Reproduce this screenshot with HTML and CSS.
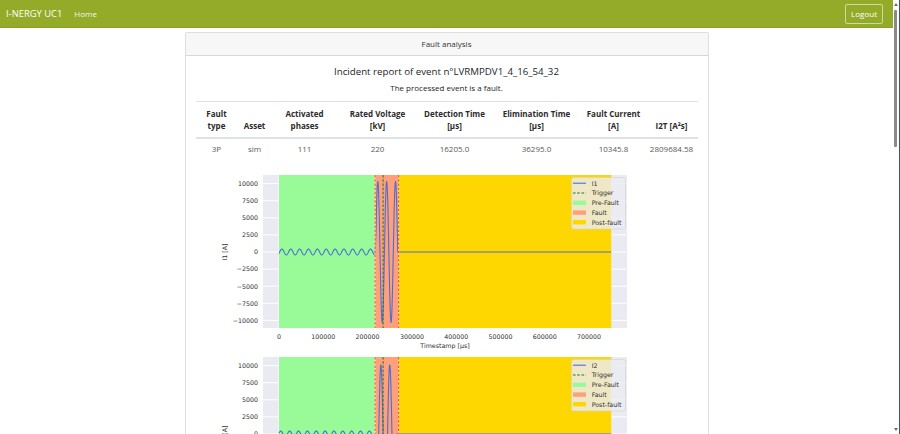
FILE: index.html
```html
<!DOCTYPE html>
<html lang="en">
<head>
<meta charset="utf-8">
<title>I-NERGY UC1</title>
<link rel="stylesheet" href="styles.css">
</head>
<body>
<div class="page">
  <nav class="navbar">
    <a class="brand" href="#">I-NERGY UC1</a>
    <a class="nav-link" href="#">Home</a>
    <button class="btn-logout" type="button">Logout</button>
  </nav>
  <main class="container">
    <section class="card">
      <header class="card-header">Fault analysis</header>
      <div class="card-body">
        <h5 class="title">Incident report of event n°LVRMPDV1_4_16_54_32</h5>
        <p class="subtitle">The processed event is a fault.</p>
        <table class="report">
          <colgroup>
            <col class="c-type">
            <col class="c-asset">
            <col class="c-phases">
            <col class="c-voltage">
            <col class="c-detect">
            <col class="c-elim">
            <col class="c-current">
            <col class="c-i2t">
          </colgroup>
          <thead>
            <tr>
              <th>Fault<br>type</th>
              <th>Asset</th>
              <th>Activated<br>phases</th>
              <th>Rated Voltage<br>[kV]</th>
              <th>Detection Time<br>[µs]</th>
              <th>Elimination Time<br>[µs]</th>
              <th>Fault Current<br>[A]</th>
              <th>I2T [A²s]</th>
            </tr>
          </thead>
          <tbody>
            <tr>
              <td>3P</td>
              <td>sim</td>
              <td>111</td>
              <td>220</td>
              <td>16205.0</td>
              <td>36295.0</td>
              <td>10345.8</td>
              <td>2809684.58</td>
            </tr>
          </tbody>
        </table>
        <div class="charts">
          <figure class="chart" data-signal="I1"></figure>
          <figure class="chart" data-signal="I2"></figure>
          <figure class="chart" data-signal="I3"></figure>
          <figure class="chart" data-signal="V1"></figure>
          <figure class="chart" data-signal="V2"></figure>
          <figure class="chart" data-signal="V3"></figure>
        </div>
      </div>
    </section>
  </main>
</div>
<div class="scrollbar" aria-hidden="true">
  <span class="sb-arrow sb-up"></span>
  <span class="sb-thumb"></span>
  <span class="sb-arrow sb-down"></span>
</div>
<script src="script.js"></script>
</body>
</html>
```

FILE: styles.css
```css
* { box-sizing: border-box; }

html, body { height: 100%; }

body {
  margin: 0;
  display: flex;
  overflow: hidden;
  font-family: "Open Sans", "Noto Sans", sans-serif;
  font-size: 8px;
  line-height: 1.5;
  color: #212529;
  background: #ffffff;
}

.page {
  flex: 1;
  min-width: 0;
  height: 100%;
  overflow-y: auto;
  scrollbar-width: none;
}

.page::-webkit-scrollbar { display: none; }

/* drawn scrollbar, as seen in the capture */
.scrollbar {
  flex: none;
  width: 7px;
  height: 100%;
  display: flex;
  flex-direction: column;
  background: #ffffff;
  border-right: 1px solid #2f5b8c;
}

.sb-arrow {
  height: 9px;
  display: flex;
  justify-content: center;
  align-items: center;
  padding-right: 1px;
}

.sb-arrow::before {
  content: "";
  width: 0;
  height: 0;
  border-left: 2px solid transparent;
  border-right: 2px solid transparent;
}

.sb-up::before { border-bottom: 3px solid #6e6e6e; }
.sb-down { margin-top: auto; }
.sb-down::before { border-top: 3px solid #6e6e6e; }

.sb-thumb {
  height: 137px;
  margin: 1px 2px 0 1px;
  background: #8a8a8a;
  border-radius: 1px;
}

.navbar {
  display: flex;
  align-items: center;
  height: 28px;
  padding: 0 10px 0 6px;
  background: #93ab29;
  border-bottom: 1px solid #8aa125;
}

.brand {
  font-size: 9.4px;
  line-height: 15px;
  color: #ffffff;
  text-decoration: none;
  margin-right: 8px;
}

.nav-link {
  color: rgba(255, 255, 255, 0.92);
  text-decoration: none;
  padding: 0 4px;
}

.btn-logout {
  margin-left: auto;
  font: inherit;
  line-height: 12px;
  color: #ffffff;
  background: transparent;
  border: 1px solid rgba(255, 255, 255, 0.55);
  border-radius: 2px;
  padding: 3px 5px;
}

.container {
  padding: 4px 0 48px;
}

.card {
  width: 524px;
  margin: 0 auto;
  border: 1px solid rgba(0, 0, 0, 0.125);
  border-radius: 2px;
  background: #ffffff;
}

.card-header {
  background: #f7f7f7;
  border-bottom: 1px solid rgba(0, 0, 0, 0.125);
  padding: 5px 10px;
  text-align: center;
  color: #333333;
}

.card-body {
  padding: 10px;
  text-align: center;
}

.title {
  font-size: 9.7px;
  font-weight: 500;
  line-height: 12px;
  margin: 0 0 4px;
  color: #212529;
}

.subtitle {
  margin: 0 0 7px;
}

.report {
  width: 100%;
  table-layout: fixed;
  border-collapse: collapse;
  margin-bottom: 7px;
}

.c-type { width: 42px; }
.c-asset { width: 34px; }
.c-phases { width: 66px; }
.c-voltage { width: 80px; }
.c-detect { width: 74px; }
.c-elim { width: 90px; }
.c-current { width: 64px; }
.c-i2t { width: 52px; }

.report th,
.report td {
  border-top: 1px solid #dee2e6;
  text-align: center;
  white-space: nowrap;
}

.report thead th {
  vertical-align: bottom;
  padding: 6px 0 5px;
  border-bottom: 2px solid #dee2e6;
  font-weight: 700;
  color: #2b2b2b;
}

.report td {
  padding: 4px 0 7px;
  color: #5a5a5a;
}

.charts {
  display: flex;
  flex-direction: column;
  align-items: center;
}

.chart {
  margin: 0;
  width: 460px;
  height: 182px;
}

.chart svg {
  display: block;
}

.chart text {
  font-family: "DejaVu Sans", sans-serif;
  font-size: 6.3px;
  fill: #2e2e2e;
}
```

FILE: script.js
```js
(function () {
  var PL = 46, PR = 410, PT = 6, PB = 159;
  var X0 = 62, KX = 0.000443;
  var OM = 2 * Math.PI / 20000;
  var T_PRE = 217000, T_FAULT = 270000, T_END = 750000, T_TRIG = 235000;

  function xp(t) { return X0 + t * KX; }

  var current = {
    ymax: 11257, ymin: -11111,
    ticks: [10000, 7500, 5000, 2500, 0, -2500, -5000, -7500, -10000]
  };
  var voltage = {
    ymax: 200000, ymin: -200000,
    ticks: [150000, 100000, 50000, 0, -50000, -100000, -150000]
  };

  var signals = {
    I1: { scale: current, unit: "I1 [A]",
      pre: function (t) { return 430 * Math.sin(OM * t - 0.5); },
      fault: function (t) { return 10300 * Math.cos(OM * (t - 223000)); },
      fs: 219000, fe: 268000 },
    I2: { scale: current, unit: "I2 [A]",
      pre: function (t) { return 430 * Math.sin(OM * t + 0.3); },
      fault: function (t) { return 10100 * Math.cos(OM * (t - 230000)); },
      fs: 219000, fe: 265000 },
    I3: { scale: current, unit: "I3 [A]",
      pre: function (t) { return 430 * Math.sin(OM * t + 2.4); },
      fault: function (t) { return 10200 * Math.cos(OM * (t - 226000)); },
      fs: 219000, fe: 261000 },
    V1: { scale: voltage, unit: "V1 [V]",
      pre: function (t) { return 180000 * Math.sin(OM * t); },
      fault: function (t) { return 60000 * Math.sin(OM * t); },
      fs: 217000, fe: 270000 },
    V2: { scale: voltage, unit: "V2 [V]",
      pre: function (t) { return 180000 * Math.sin(OM * t - 2.094); },
      fault: function (t) { return 60000 * Math.sin(OM * t - 2.094); },
      fs: 217000, fe: 270000 },
    V3: { scale: voltage, unit: "V3 [V]",
      pre: function (t) { return 180000 * Math.sin(OM * t + 2.094); },
      fault: function (t) { return 60000 * Math.sin(OM * t + 2.094); },
      fs: 217000, fe: 270000 }
  };

  function fmt(v) {
    return v < 0 ? "\u2212" + Math.abs(v) : String(v);
  }

  function build(name) {
    var sig = signals[name];
    var sc = sig.scale;
    var KY = (PB - PT) / (sc.ymax - sc.ymin);
    var Y0 = PT + sc.ymax * KY;
    function yp(v) { return Y0 - v * KY; }
    var s = [];
    s.push('<svg width="460" height="182" viewBox="0 0 460 182" xmlns="http://www.w3.org/2000/svg">');
    s.push('<rect x="' + PL + '" y="' + PT + '" width="' + (PR - PL) + '" height="' + (PB - PT) + '" fill="#eaeaf2"/>');
    var xt = [0, 100000, 200000, 300000, 400000, 500000, 600000, 700000];
    xt.forEach(function (t) {
      var x = xp(t).toFixed(2);
      s.push('<line x1="' + x + '" y1="' + PT + '" x2="' + x + '" y2="' + PB + '" stroke="#ffffff" stroke-width="1"/>');
    });
    sc.ticks.forEach(function (v) {
      var y = yp(v).toFixed(2);
      s.push('<line x1="' + PL + '" y1="' + y + '" x2="' + PR + '" y2="' + y + '" stroke="#ffffff" stroke-width="1"/>');
    });
    s.push('<rect x="' + xp(0).toFixed(2) + '" y="' + PT + '" width="' + (xp(T_PRE) - xp(0)).toFixed(2) + '" height="' + (PB - PT) + '" fill="#98fb98"/>');
    s.push('<rect x="' + xp(T_PRE).toFixed(2) + '" y="' + PT + '" width="' + (xp(T_FAULT) - xp(T_PRE)).toFixed(2) + '" height="' + (PB - PT) + '" fill="#ffa07a"/>');
    s.push('<rect x="' + xp(T_FAULT).toFixed(2) + '" y="' + PT + '" width="' + (xp(T_END) - xp(T_FAULT)).toFixed(2) + '" height="' + (PB - PT) + '" fill="#ffd700"/>');

    var pts = [];
    var t;
    for (t = 0; t <= T_PRE; t += 500) pts.push(xp(t).toFixed(2) + "," + yp(sig.pre(t)).toFixed(2));
    for (t = sig.fs; t <= sig.fe; t += 250) pts.push(xp(t).toFixed(2) + "," + yp(sig.fault(t)).toFixed(2));
    if (name.charAt(0) === "I") {
      pts.push(xp(sig.fe).toFixed(2) + "," + yp(0).toFixed(2));
      pts.push(xp(T_END).toFixed(2) + "," + yp(0).toFixed(2));
    } else {
      for (t = sig.fe; t <= T_END; t += 500) pts.push(xp(t).toFixed(2) + "," + yp(sig.pre(t)).toFixed(2));
    }
    s.push('<polyline points="' + pts.join(" ") + '" fill="none" stroke="#4a6fd6" stroke-width="1.1" stroke-linejoin="round"/>');

    [T_PRE, T_FAULT].forEach(function (tb) {
      var x = xp(tb).toFixed(2);
      s.push('<line x1="' + x + '" y1="' + PT + '" x2="' + x + '" y2="' + PB + '" stroke="#fff1d6" stroke-width="1"/>');
      s.push('<line x1="' + x + '" y1="' + PT + '" x2="' + x + '" y2="' + PB + '" stroke="#ff4a12" stroke-width="1" stroke-dasharray="2.6,1.6"/>');
    });
    var xg = xp(T_TRIG).toFixed(2);
    s.push('<line x1="' + xg + '" y1="' + PT + '" x2="' + xg + '" y2="' + PB + '" stroke="#1f7a1f" stroke-width="1" stroke-dasharray="2.6,1.6"/>');

    sc.ticks.forEach(function (v) {
      s.push('<text x="41" y="' + (yp(v) + 2.3).toFixed(2) + '" text-anchor="end">' + fmt(v) + '</text>');
    });
    xt.forEach(function (tt) {
      s.push('<text x="' + xp(tt).toFixed(2) + '" y="169.5" text-anchor="middle">' + tt + '</text>');
    });
    s.push('<text x="228" y="178.6" text-anchor="middle">Timestamp [\u00b5s]</text>');
    s.push('<text x="10.4" y="' + Y0.toFixed(2) + '" text-anchor="middle" transform="rotate(-90 10.4 ' + Y0.toFixed(2) + ')">' + sig.unit + '</text>');

    var lx = 354.5, ly = 8.5;
    s.push('<rect x="' + lx + '" y="' + ly + '" width="54" height="51.5" rx="2" fill="rgba(236,236,242,0.82)" stroke="#d2d2d2" stroke-width="0.6"/>');
    var rows = [14.2, 24, 33.8, 43.6, 53.2];
    s.push('<line x1="356" y1="' + rows[0] + '" x2="369" y2="' + rows[0] + '" stroke="#4a6fd6" stroke-width="1.1"/>');
    s.push('<line x1="356" y1="' + rows[1] + '" x2="369" y2="' + rows[1] + '" stroke="#1f7a1f" stroke-width="1" stroke-dasharray="2.6,1.6"/>');
    s.push('<rect x="356" y="' + (rows[2] - 2.2) + '" width="13" height="4.4" fill="#98fb98"/>');
    s.push('<rect x="356" y="' + (rows[3] - 2.2) + '" width="13" height="4.4" fill="#ffa07a"/>');
    s.push('<rect x="356" y="' + (rows[4] - 2.2) + '" width="13" height="4.4" fill="#ffd700"/>');
    var labels = [name, "Trigger", "Pre-Fault", "Fault", "Post-fault"];
    labels.forEach(function (lb, i) {
      s.push('<text x="374.7" y="' + (rows[i] + 2.3).toFixed(2) + '">' + lb + '</text>');
    });
    s.push('</svg>');
    return s.join("");
  }

  var figs = document.querySelectorAll(".chart[data-signal]");
  Array.prototype.forEach.call(figs, function (f) {
    f.innerHTML = build(f.getAttribute("data-signal"));
  });
})();
```
